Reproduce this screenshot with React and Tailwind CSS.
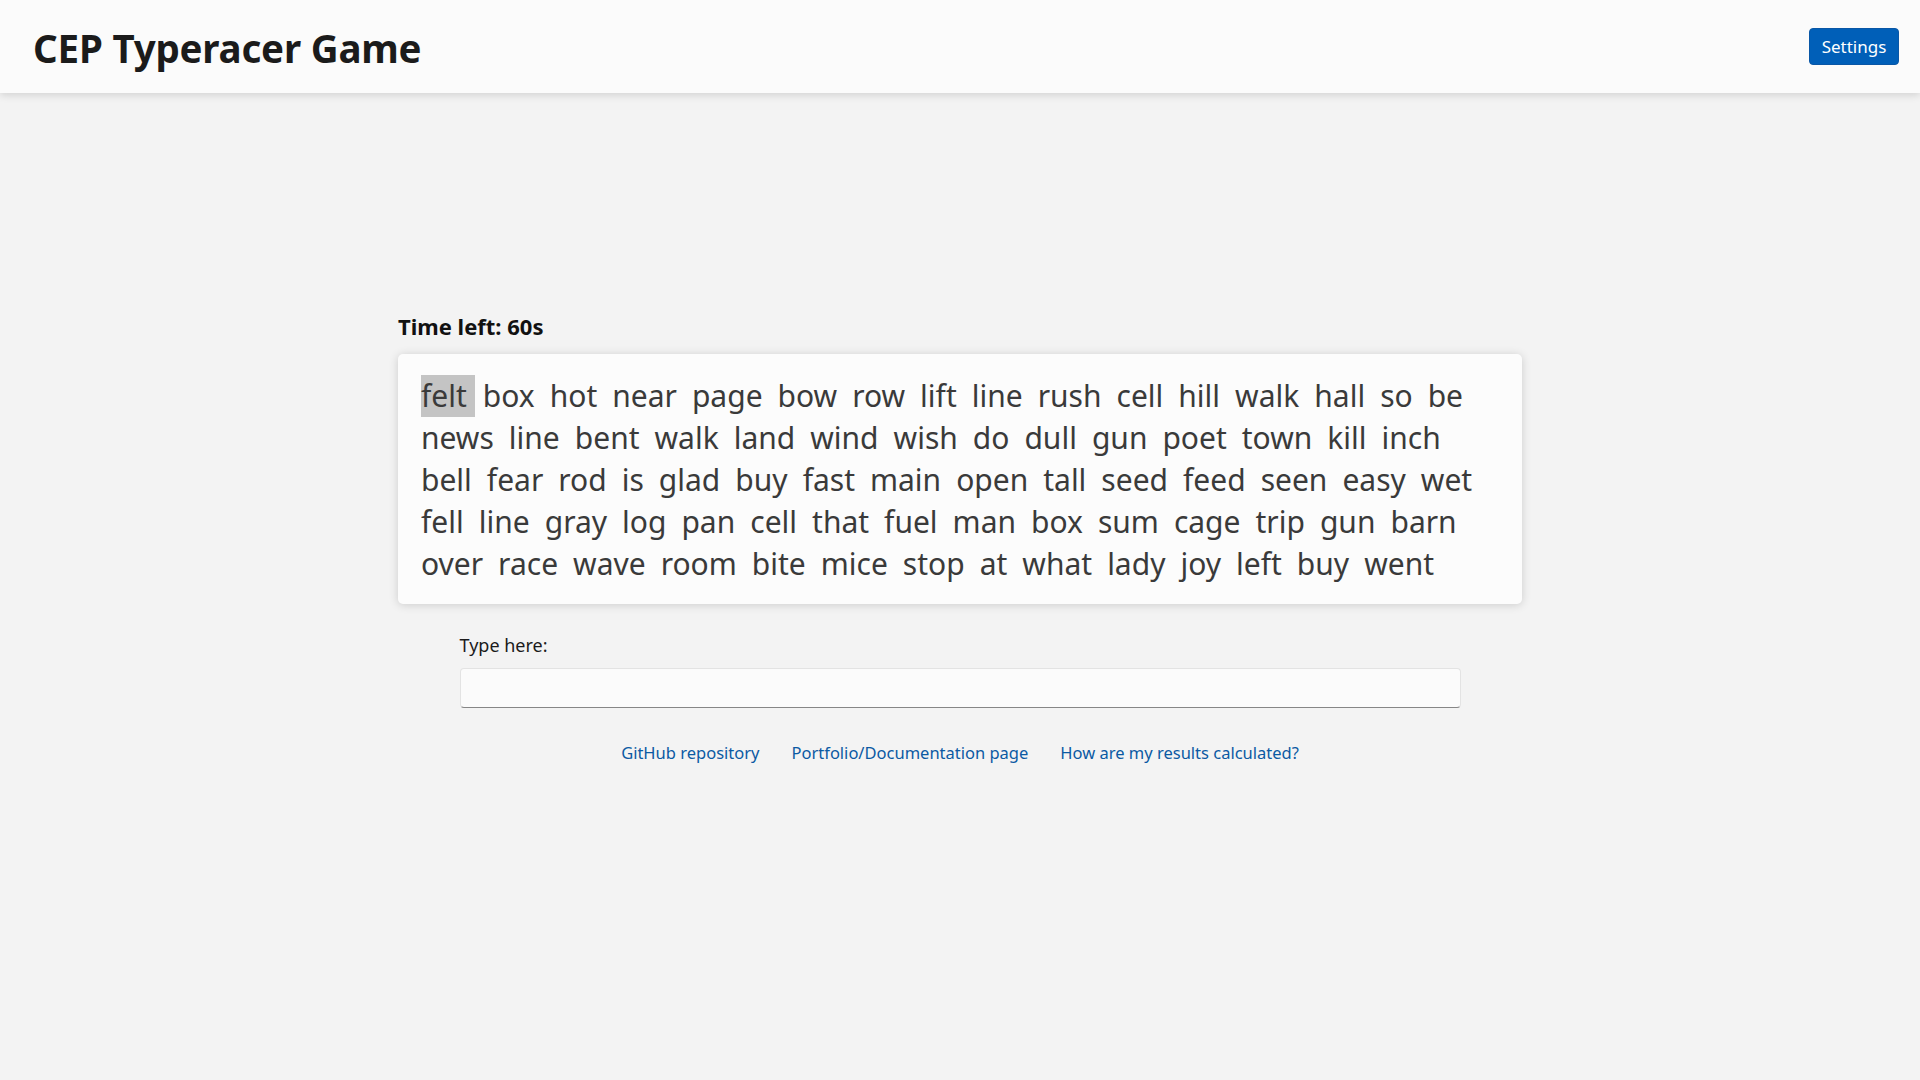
const lines = [
  ['felt', 'box', 'hot', 'near', 'page', 'bow', 'row', 'lift', 'line', 'rush', 'cell', 'hill', 'walk', 'hall', 'so', 'be'],
  ['news', 'line', 'bent', 'walk', 'land', 'wind', 'wish', 'do', 'dull', 'gun', 'poet', 'town', 'kill', 'inch'],
  ['bell', 'fear', 'rod', 'is', 'glad', 'buy', 'fast', 'main', 'open', 'tall', 'seed', 'feed', 'seen', 'easy', 'wet'],
  ['fell', 'line', 'gray', 'log', 'pan', 'cell', 'that', 'fuel', 'man', 'box', 'sum', 'cage', 'trip', 'gun', 'barn'],
  ['over', 'race', 'wave', 'room', 'bite', 'mice', 'stop', 'at', 'what', 'lady', 'joy', 'left', 'buy', 'went'],
]

export default function App() {
  return (
    <div className="min-h-screen bg-[#f3f3f3] text-[#1b1b1b] font-['Noto_Sans',sans-serif]">
      <header className="h-[93px] bg-[#fbfbfb] shadow-[0_2px_8px_rgba(0,0,0,0.14)] flex items-center justify-between pl-[33px] pr-[21px]">
        <h1 className="text-[38.5px] font-bold tracking-[-0.2px] leading-none mt-[3px]">CEP Typeracer Game</h1>
        <button className="h-[37px] w-[90px] rounded-[4px] bg-[#005fb8] text-white text-[17px] border border-[#0a57a6]">
          Settings
        </button>
      </header>

      <main className="flex flex-col items-center pt-[217px]">
        <div className="w-[1124px]">
          <div className="text-[22px] font-bold leading-[32px] text-[#111]">Time left: 60s</div>
          <div className="mt-[12px] rounded-[5px] bg-[#fcfcfc] shadow-[0_1px_10px_rgba(0,0,0,0.16)] pl-[23px] pr-[20px] pt-[21px] pb-[19px] text-[30px] leading-[42px] text-[#3a3a3a]">
            {lines.map((words, i) => (
              <div key={i} className="flex whitespace-nowrap">
                {words.map((w, j) => (
                  <span
                    key={j}
                    className={
                      i === 0 && j === 0
                        ? 'bg-[#c4c4c4] pr-[8px] mr-[8px]'
                        : 'mr-[15px]'
                    }
                  >
                    {w}
                  </span>
                ))}
              </div>
            ))}
          </div>
        </div>

        <div className="w-[1001px] mt-[29px]">
          <label className="block text-[18px] leading-[24px] text-[#1b1b1b]">Type here:</label>
          <input
            type="text"
            className="mt-[11px] block w-full h-[40px] rounded-[4px] bg-[#fbfbfb] border border-[#e3e3e3] border-b-[#868686] outline-none px-3 text-[18px]"
          />
        </div>

        <nav className="mt-[33px] flex gap-[32px] text-[16.5px] leading-[24px] text-[#0b5aa3]">
          <a href="#">GitHub repository</a>
          <a href="#">Portfolio/Documentation page</a>
          <a href="#">How are my results calculated?</a>
        </nav>
      </main>
    </div>
  )
}
